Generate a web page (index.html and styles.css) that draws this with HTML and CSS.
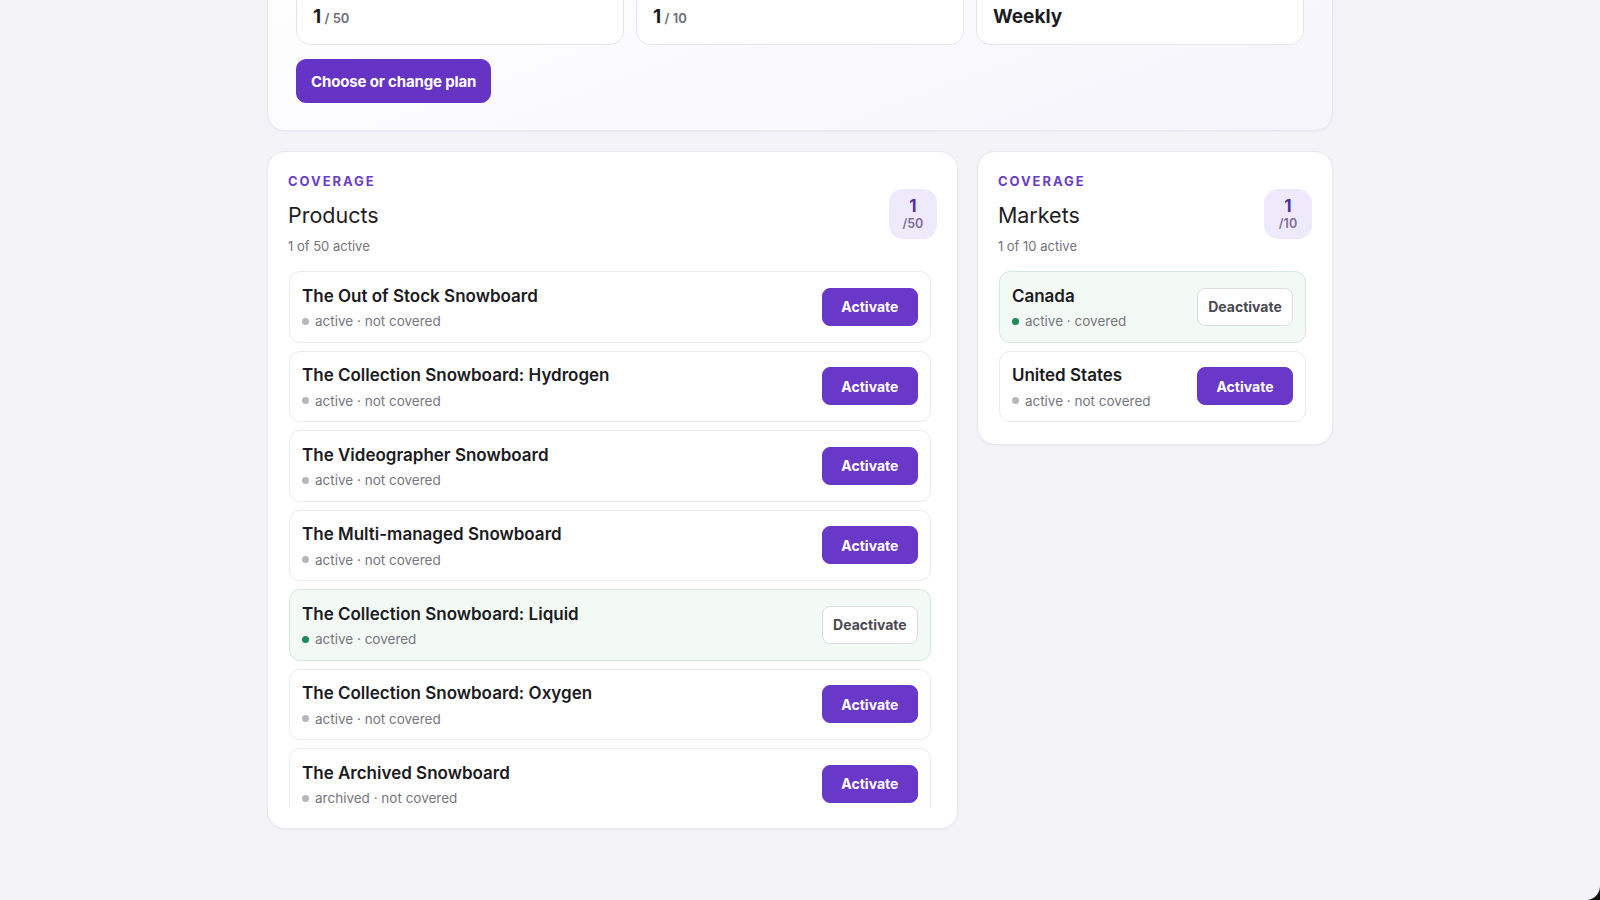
FILE: index.html
```html
<!DOCTYPE html>
<html lang="en">
<head>
<meta charset="utf-8">
<title>Coverage</title>
<link rel="stylesheet" href="styles.css">
</head>
<body>
<main class="page">
  <section class="panel plan">
    <div class="stats">
      <div class="stat"><span class="stat-value">1</span><span class="stat-of"> / 50</span></div>
      <div class="stat"><span class="stat-value">1</span><span class="stat-of"> / 10</span></div>
      <div class="stat"><span class="stat-value">Weekly</span></div>
    </div>
    <button class="btn btn-primary btn-lg" type="button">Choose or change plan</button>
  </section>

  <div class="coverage">
    <section class="panel cov">
      <header class="cov-head">
        <div class="cov-info">
          <div class="eyebrow">COVERAGE</div>
          <h2 class="cov-title">Products</h2>
          <p class="cov-sub">1 of 50 active</p>
        </div>
        <div class="count"><strong>1</strong><span>/50</span></div>
      </header>
      <ul class="items items-scroll">
        <li class="item">
          <div class="item-text"><div class="item-name">The Out of Stock Snowboard</div><div class="item-status"><i class="dot"></i>active · not covered</div></div>
          <button class="btn btn-primary" type="button">Activate</button>
        </li>
        <li class="item">
          <div class="item-text"><div class="item-name">The Collection Snowboard: Hydrogen</div><div class="item-status"><i class="dot"></i>active · not covered</div></div>
          <button class="btn btn-primary" type="button">Activate</button>
        </li>
        <li class="item">
          <div class="item-text"><div class="item-name">The Videographer Snowboard</div><div class="item-status"><i class="dot"></i>active · not covered</div></div>
          <button class="btn btn-primary" type="button">Activate</button>
        </li>
        <li class="item">
          <div class="item-text"><div class="item-name">The Multi-managed Snowboard</div><div class="item-status"><i class="dot"></i>active · not covered</div></div>
          <button class="btn btn-primary" type="button">Activate</button>
        </li>
        <li class="item is-covered">
          <div class="item-text"><div class="item-name">The Collection Snowboard: Liquid</div><div class="item-status"><i class="dot"></i>active · covered</div></div>
          <button class="btn btn-ghost" type="button">Deactivate</button>
        </li>
        <li class="item">
          <div class="item-text"><div class="item-name">The Collection Snowboard: Oxygen</div><div class="item-status"><i class="dot"></i>active · not covered</div></div>
          <button class="btn btn-primary" type="button">Activate</button>
        </li>
        <li class="item">
          <div class="item-text"><div class="item-name">The Archived Snowboard</div><div class="item-status"><i class="dot"></i>archived · not covered</div></div>
          <button class="btn btn-primary" type="button">Activate</button>
        </li>
      </ul>
    </section>

    <section class="panel cov">
      <header class="cov-head">
        <div class="cov-info">
          <div class="eyebrow">COVERAGE</div>
          <h2 class="cov-title">Markets</h2>
          <p class="cov-sub">1 of 10 active</p>
        </div>
        <div class="count"><strong>1</strong><span>/10</span></div>
      </header>
      <ul class="items">
        <li class="item is-covered">
          <div class="item-text"><div class="item-name">Canada</div><div class="item-status"><i class="dot"></i>active · covered</div></div>
          <button class="btn btn-ghost" type="button">Deactivate</button>
        </li>
        <li class="item">
          <div class="item-text"><div class="item-name">United States</div><div class="item-status"><i class="dot"></i>active · not covered</div></div>
          <button class="btn btn-primary" type="button">Activate</button>
        </li>
      </ul>
    </section>
  </div>
</main>
<div class="window-corner"></div>
</body>
</html>
```

FILE: styles.css
```css
* { box-sizing: border-box; }

html, body {
  margin: 0;
  padding: 0;
  height: 100%;
}

body {
  background: #f4f3f8;
  font-family: Inter, "Noto Sans", "Liberation Sans", sans-serif;
  color: #1e1c25;
  overflow: hidden;
}

.page {
  width: 1066px;
  margin: 0 auto;
  display: flex;
  flex-direction: column;
  gap: 20px;
}

.panel {
  background: #ffffff;
  border: 1px solid #e9e7f0;
  border-radius: 18px;
  box-shadow: 0 1px 3px rgba(40, 30, 80, 0.04);
}

/* plan summary (scrolled partly out of view) */
.plan {
  margin-top: -42px;
  padding: 28px 28px 27px;
  display: flex;
  flex-direction: column;
  background: linear-gradient(160deg, #ffffff 0%, #f8f7fc 70%, #f6f5fb 100%);
}

.stats {
  display: grid;
  grid-template-columns: repeat(3, 1fr);
  gap: 12px;
}

.stat {
  background: #ffffff;
  border: 1px solid #e7e5ee;
  border-radius: 14px;
  padding: 15px 16px 13px;
  height: 58px;
  display: flex;
  align-items: baseline;
  white-space: pre;
}

.stat-value {
  font-size: 19px;
  line-height: 28px;
  font-weight: 700;
  color: #1d1b24;
}

.stat-of {
  font-size: 13px;
  line-height: 1;
  font-weight: 600;
  color: #6e6c76;
}

.btn {
  font-family: inherit;
  font-weight: 700;
  font-size: 14px;
  border-radius: 8px;
  cursor: pointer;
  height: 38px;
  width: 96px;
  padding: 0;
  flex: none;
}

.btn-primary {
  background: #6a38c9;
  border: 1px solid #6a38c9;
  color: #ffffff;
}

.btn-ghost {
  background: #ffffff;
  border: 1px solid #dddbe3;
  color: #4a4850;
}

.btn-lg {
  margin-top: 14px;
  align-self: flex-start;
  width: auto;
  height: 44px;
  padding: 0 14px;
  font-size: 15px;
  letter-spacing: -0.01em;
  border-radius: 10px;
  background: #6634c4;
  border-color: #6634c4;
}

/* coverage columns */
.coverage {
  display: grid;
  grid-template-columns: minmax(0, 1.94fr) minmax(0, 1fr);
  gap: 19px;
  align-items: start;
}

.cov {
  padding: 20px;
}

.cov-head {
  display: flex;
  align-items: center;
  justify-content: space-between;
  margin-bottom: 14px;
}

.eyebrow {
  font-size: 13px;
  line-height: 18px;
  font-weight: 700;
  letter-spacing: 0.15em;
  color: #6a3dc6;
  margin-bottom: 10px;
}

.cov-title {
  margin: 0;
  font-size: 21.5px;
  line-height: 30px;
  font-weight: 400;
  color: #1f1d26;
}

.cov-sub {
  margin: 6px 0 0;
  font-size: 13px;
  line-height: 20px;
  color: #75737c;
}

.count {
  min-width: 48px;
  height: 50px;
  padding: 0 12px;
  border-radius: 14px;
  background: #efe9fc;
  display: flex;
  flex-direction: column;
  align-items: center;
  justify-content: center;
}

.count strong {
  font-size: 17px;
  line-height: 20px;
  font-weight: 700;
  color: #54309e;
}

.count span {
  font-size: 12.5px;
  line-height: 16px;
  font-weight: 600;
  color: #7b6f96;
}

.items {
  list-style: none;
  margin: 0;
  padding: 1px 6px 2px 1px;
  display: flex;
  flex-direction: column;
  gap: 8px;
}

.items-scroll {
  max-height: 538px;
  overflow-y: auto;
  scrollbar-width: none;
}

.items-scroll::-webkit-scrollbar { display: none; }

.item {
  flex: none;
  display: flex;
  align-items: center;
  justify-content: space-between;
  gap: 12px;
  padding: 12.5px 12px 10.5px;
  border: 1px solid #ebeaf0;
  border-radius: 11px;
  background: #ffffff;
}

.item .btn { margin-top: -2px; }

.item.is-covered {
  background: #f3faf6;
  border-color: #d2eadb;
}

.item-name {
  font-size: 17px;
  line-height: 22px;
  font-weight: 600;
  color: #1c1a22;
}

.item-status {
  margin-top: 4.5px;
  font-size: 13.5px;
  line-height: 20px;
  color: #77757e;
  display: flex;
  align-items: center;
}

.dot {
  width: 7px;
  height: 7px;
  border-radius: 50%;
  background: #b7b6bd;
  margin-right: 6px;
}

.is-covered .dot { background: #1e8a5a; }

/* rounded corner of the host window */
.window-corner {
  position: fixed;
  right: 0;
  bottom: 0;
  width: 14px;
  height: 14px;
  background: radial-gradient(circle at 0 0, transparent 13.5px, #101010 14.5px);
}
```
